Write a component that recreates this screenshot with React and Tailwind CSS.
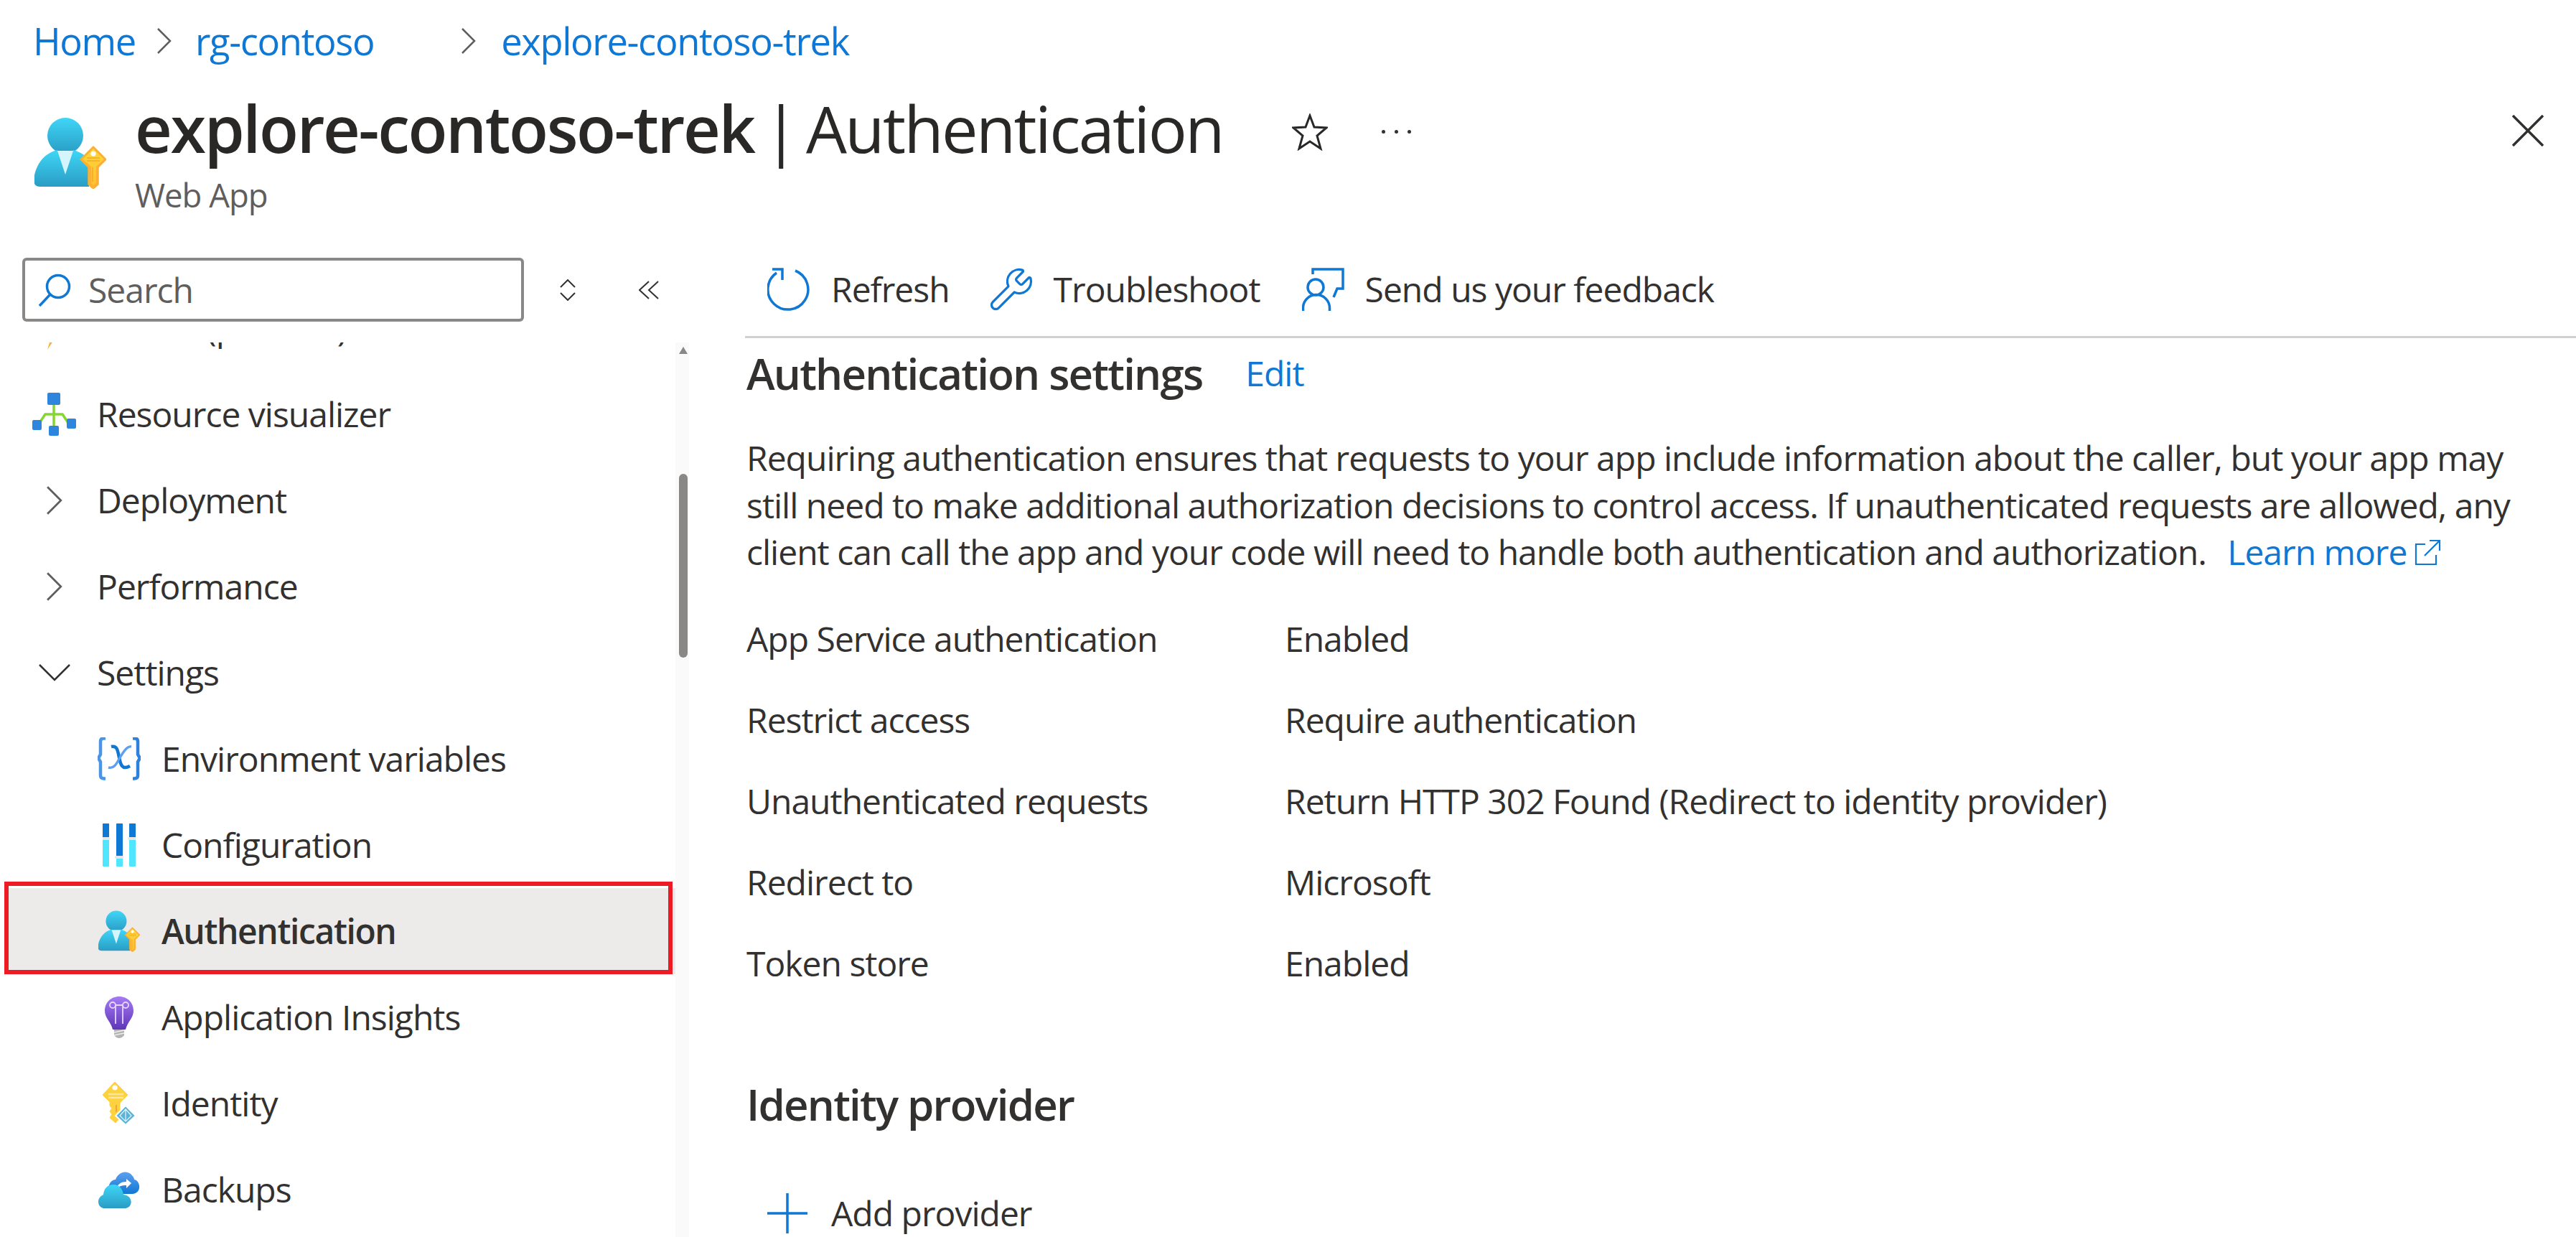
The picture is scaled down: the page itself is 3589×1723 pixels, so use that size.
import React from 'react';
import { Wrench } from 'lucide-react';

const Chevron = ({ className }) => (
  <svg className={className} viewBox="0 0 20 36" fill="none" stroke="#605e5c" strokeWidth="2.5">
    <path d="M1 1 L18 18 L1 35" />
  </svg>
);

const AuthIcon = ({ id, className }) => (
  <svg className={className} viewBox="0 0 100 100">
    <defs>
      <linearGradient id={`${id}-a`} x1="0" y1="0" x2="0" y2="1">
        <stop offset="0" stopColor="#3fd6f7" />
        <stop offset="1" stopColor="#2a9cc4" />
      </linearGradient>
      <linearGradient id={`${id}-k`} x1="0" y1="0" x2="0" y2="1">
        <stop offset="0" stopColor="#ffd83b" />
        <stop offset="1" stopColor="#fcc02e" />
      </linearGradient>
    </defs>
    <circle cx="43" cy="26" r="25" fill={`url(#${id}-a)`} />
    <path d="M-1 88 C1 66 14 50 32 46 L43 62 L54 46 C62 48 70 52 76 60 L76 97 L8 97 Q-1 97 -1 88Z" fill={`url(#${id}-a)`} />
    <path d="M32 47 L54 47 L43 80Z" fill="#d5f5fc" />
    <path d="M82 41 L100 59 L89 70 L89 94 L82 100 L75 94 L75 70 L64 59Z" fill="#fbb034" stroke="#fbb034" strokeWidth="1.5" strokeLinejoin="round" />
    <path d="M82 44 L97 59 L86 69 L86 92 L82 96 L79 92 L79 69 L67 59Z" fill={`url(#${id}-k)`} />
    <circle cx="82" cy="51" r="3.6" fill="#fff" />
    <path d="M73 57 H91 M73 61 H91" stroke="#f9a825" strokeWidth="1.6" />
    <path d="M81 70 V90" stroke="#f9a825" strokeWidth="1.6" />
  </svg>
);

const VisualizerIcon = () => (
  <svg className="w-[62px] h-[60px]" viewBox="0 0 62 60" fill="none">
    <path d="M30 14 V50 M10 42 L18 30 H42 L50 42" stroke="#86d633" strokeWidth="3.5" />
    <rect x="21" y="0" width="18" height="17" rx="2" fill="#2d85de" />
    <rect x="0" y="38" width="13" height="14" rx="2" fill="#2d85de" />
    <rect x="48" y="36" width="13" height="14" rx="2" fill="#2d85de" />
    <rect x="23" y="46" width="14" height="14" rx="2" fill="#2d85de" />
  </svg>
);

const EnvIcon = () => (
  <svg className="w-[60px] h-[60px]" viewBox="0 0 60 60" fill="none">
    <path d="M11 1.5 H8 Q4 1.5 4 6 V24 L1 29 L4 34 V53 Q4 57.5 9 57.5 H11" stroke="#4b95e6" strokeWidth="4.5" />
    <path d="M49 1.5 H52 Q56 1.5 56 6 V24 L59 29 L56 34 V53 Q56 57.5 51 57.5 H49" stroke="#2c82dc" strokeWidth="4.5" />
    <path d="M19 13 C27 11 28 18 30 28 C32 38 34 46 45 40" stroke="#0f78d4" strokeWidth="4.5" />
    <path d="M47 13 C41 12 36 20 30 30 C26 38 22 44 15 42" stroke="#5ea0ef" strokeWidth="3.4" />
  </svg>
);

const ConfigIcon = () => (
  <svg className="w-[46px] h-[60px]" viewBox="0 0 46 60">
    <rect x="0" y="0" width="9" height="60" rx="1" fill="#50e6ff" />
    <rect x="19" y="0" width="9" height="60" rx="1" fill="#50e6ff" />
    <rect x="37" y="0" width="9" height="60" rx="1" fill="#50e6ff" />
    <rect x="0" y="0" width="9" height="22" rx="1" fill="#0f78d4" />
    <rect x="19" y="0" width="9" height="48" rx="1" fill="#0f78d4" />
    <rect x="37" y="0" width="9" height="22" rx="1" fill="#0f78d4" />
    <rect x="-2" y="19" width="12" height="4" rx="1.5" fill="#e6e6e6" />
    <rect x="17" y="45" width="12" height="4" rx="1.5" fill="#e6e6e6" />
    <rect x="35" y="19" width="12" height="4" rx="1.5" fill="#e6e6e6" />
  </svg>
);

const BulbIcon = () => (
  <svg className="w-[40px] h-[58px]" viewBox="0 0 40 58" fill="none">
    <defs>
      <linearGradient id="bulb" x1="0" y1="0" x2="0" y2="1">
        <stop offset="0" stopColor="#a67af4" />
        <stop offset="1" stopColor="#5e35b8" />
      </linearGradient>
    </defs>
    <path d="M20 0 C32 0 40 9 40 20 C40 30 31 36 29 46 H11 C9 36 0 30 0 20 C0 9 8 0 20 0Z" fill="url(#bulb)" />
    <path d="M15 12 V38 M25 12 V38 M15 12 H25" stroke="#e6d5fb" strokeWidth="1.8" />
    <circle cx="11" cy="12" r="4" stroke="#e6d5fb" strokeWidth="1.8" />
    <circle cx="29" cy="12" r="4" stroke="#e6d5fb" strokeWidth="1.8" />
    <path d="M13 46 H27 V54 Q24 58 20 58 Q16 58 13 54Z" fill="#b3b3b3" />
    <path d="M13 50 L27 47 M13 54 L27 51" stroke="#eeeeee" strokeWidth="1.4" />
  </svg>
);

const IdentityIcon = () => (
  <svg className="w-[46px] h-[60px]" viewBox="0 0 46 60" fill="none">
    <path d="M17 0 L35 18 L24 29 L24 50 L18 57 L10 50 L13 45 L10 41 L13 37 L10 33 L10 28 L0 18Z" fill="#fdd23e" stroke="#fdd23e" strokeWidth="1" strokeLinejoin="round" />
    <circle cx="17" cy="8" r="3.6" fill="#fff" />
    <path d="M8 17 H29 M8 22 H29" stroke="#fbe8a0" strokeWidth="2.4" />
    <path d="M19 32 V42" stroke="#f6a33b" strokeWidth="2" />
    <path d="M32 33 L46 47 L32 60 L18 47Z" fill="#5cb3d8" stroke="#fff" strokeWidth="2" />
    <path d="M32 38 L40 47 L32 55 L24 47Z M32 38 V55" stroke="#e3f4fb" strokeWidth="1.2" />
  </svg>
);

const BackupIcon = () => (
  <svg className="w-[60px] h-[52px]" viewBox="0 0 60 52" fill="none">
    <defs>
      <linearGradient id="cloud-b" x1="0" y1="0" x2="0" y2="1">
        <stop offset="0" stopColor="#5ea0ef" />
        <stop offset="1" stopColor="#0f78d4" />
      </linearGradient>
      <linearGradient id="cloud-f" x1="0" y1="0" x2="0" y2="1">
        <stop offset="0" stopColor="#3fd6f7" />
        <stop offset="1" stopColor="#2a9cc4" />
      </linearGradient>
    </defs>
    <path d="M18 32 C12 22 18 12 25 12 C28 3 38 -2 46 4 C50 8 51 10 51 12 C60 13 62 32 48 32Z" fill="url(#cloud-b)" />
    <path d="M26 25 C28 18 33 15 40 15 L40 11 L47 17 L40 24 L40 20 C34 20 30 21 26 25Z" fill="#fff" />
    <path d="M10 52 C0 52 -3 38 8 33 C9 24 14 19 22 19 C31 19 35 26 36 33 C50 34 50 52 37 52Z" fill="url(#cloud-f)" />
  </svg>
);

const RefreshIcon = () => (
  <svg className="w-[60px] h-[60px]" viewBox="0 0 60 60" fill="none" stroke="#0f78d4" strokeWidth="3.5">
    <path d="M39 4 A28 28 0 1 1 13 7" />
    <path d="M7 2 H21 V17" />
  </svg>
);

const FeedbackIcon = () => (
  <svg className="w-[59px] h-[60px]" viewBox="0 0 59 60" fill="none" stroke="#0f78d4" strokeWidth="3.5">
    <path d="M15 9 V2 H57 V29 H49 L44 41" />
    <circle cx="19" cy="27" r="11" />
    <path d="M1.5 60 V56 A18.5 18.5 0 0 1 38.5 56 V60" />
  </svg>
);

const MenuRow = ({ icon, label, sub, active }) => (
  <div className={`flex items-center h-[120px] ${sub ? 'pl-[130px]' : 'pl-[39px]'} ${active ? 'bg-[#edebe9] font-semibold tracking-[-1.4px]' : ''}`}>
    <div className={`flex items-center justify-center shrink-0 ${sub ? 'w-[60px] mr-[29px]' : 'w-[62px] mr-[28px]'}`}>{icon}</div>
    <span>{label}</span>
  </div>
);

const settings = [
  { label: 'App Service authentication', value: 'Enabled' },
  { label: 'Restrict access', value: 'Require authentication' },
  { label: 'Unauthenticated requests', value: 'Return HTTP 302 Found (Redirect to identity provider)' },
  { label: 'Redirect to', value: 'Microsoft' },
  { label: 'Token store', value: 'Enabled' },
];

const App = () => {
  return (
    <div className="w-[3589px] h-[1723px] overflow-hidden bg-white text-[#323130] text-[48px] leading-[66px] font-['Open_Sans',sans-serif] tracking-[-1px]">
      {/* Breadcrumb */}
      <div className="flex items-center h-[58px] mt-[28px] pl-[46px] text-[#0f78d4] text-[52.5px] tracking-[-1.35px]">
        <span>Home</span>
        <Chevron className="w-[20px] h-[36px] ml-[30px] mr-[33px]" />
        <span>rg-contoso</span>
        <Chevron className="w-[20px] h-[36px] ml-[122px] mr-[35px]" />
        <span>explore-contoso-trek</span>
      </div>

      {/* Title */}
      <div className="flex items-start pl-[48px] pr-[45px] h-[186px] pt-[32px]">
        <AuthIcon id="hdr" className="w-[100px] h-[100px] mt-[45px] shrink-0" />
        <div className="ml-[40px]">
          <div className="text-[90px] leading-[120px] text-[#292827] tracking-[-2.6px] [word-spacing:-8px] whitespace-nowrap">
            <span className="font-semibold tracking-[-2.37px] [word-spacing:0]">explore-contoso-trek</span> | Authentication
          </div>
          <div className="text-[45.5px] leading-[60px] text-[#605e5c] mt-[3px]">Web App</div>
        </div>
        <svg className="w-[50px] h-[52px] ml-[96px] mt-[40px] shrink-0" viewBox="0 0 50 52" fill="none" stroke="#292827" strokeWidth="3">
          <path d="M25 3 L31 19 L48 20 L35 31 L40 49 L25 39 L10 49 L15 31 L2 20 L19 19Z" />
        </svg>
        <div className="flex gap-[13px] ml-[75px] mt-[63px] shrink-0">
          <span className="w-[5px] h-[5px] rounded-full bg-[#323130]" />
          <span className="w-[5px] h-[5px] rounded-full bg-[#323130]" />
          <span className="w-[5px] h-[5px] rounded-full bg-[#323130]" />
        </div>
        <svg className="w-[44px] h-[44px] ml-auto mt-[42px] shrink-0" viewBox="0 0 44 44" stroke="#323130" strokeWidth="3.5">
          <path d="M1 1 L43 43 M43 1 L1 43" />
        </svg>
      </div>

      <div className="flex h-[1451px]">
        {/* Sidebar */}
        <div className="w-[960px] shrink-0 relative">
          <div className="flex items-center h-[89px] mt-[87px] ml-[31px]">
            <div className="w-[699px] h-[89px] border-[4px] border-[#8a8886] rounded-[6px] flex items-center pl-[18px] text-[#605e5c]">
              <svg className="w-[46px] h-[46px] mr-[24px]" viewBox="0 0 46 46" fill="none" stroke="#0f78d4" strokeWidth="3.5">
                <circle cx="28" cy="18" r="15.5" />
                <path d="M17 29 L2 45" />
              </svg>
              <span>Search</span>
            </div>
            <svg className="w-[22px] h-[30px] ml-[50px]" viewBox="0 0 22 30" fill="none" stroke="#323130" strokeWidth="2">
              <path d="M1 11 L11 1 L21 11 M1 19 L11 29 L21 19" />
            </svg>
            <svg className="w-[28px] h-[26px] ml-[88px]" viewBox="0 0 28 26" fill="none" stroke="#323130" strokeWidth="2">
              <path d="M14 1 L1 13 L14 25 M27 1 L14 13 L27 25" />
            </svg>
          </div>
          <div className="flex mt-[29px] h-[1246px] overflow-hidden">
            <div className="w-[941px] pl-[6px] shrink-0">
              <div className="mt-[-80px]">
                <MenuRow label="Events (preview)" icon={
                  <svg className="w-[40px] h-[60px]" viewBox="0 0 40 60"><path d="M22 0 L4 34 H18 L10 60 L36 22 H22 L30 0Z" fill="#fcb034" /></svg>
                } />
                <MenuRow label="Resource visualizer" icon={<VisualizerIcon />} />
                <MenuRow label="Deployment" icon={<Chevron className="w-[22px] h-[44px]" />} />
                <MenuRow label="Performance" icon={<Chevron className="w-[22px] h-[44px]" />} />
                <MenuRow label="Settings" icon={
                  <svg className="w-[44px] h-[24px]" viewBox="0 0 44 24" fill="none" stroke="#323130" strokeWidth="2.5"><path d="M1 1 L22 22 L43 1" /></svg>
                } />
                <MenuRow sub label="Environment variables" icon={<EnvIcon />} />
                <MenuRow sub label="Configuration" icon={<ConfigIcon />} />
                <MenuRow sub active label="Authentication" icon={<AuthIcon id="nav" className="w-[58px] h-[58px]" />} />
                <MenuRow sub label="Application Insights" icon={<BulbIcon />} />
                <MenuRow sub label="Identity" icon={<IdentityIcon />} />
                <MenuRow sub label="Backups" icon={<BackupIcon />} />
              </div>
            </div>
            {/* Scrollbar */}
            <div className="w-[19px] bg-[#fafafa] pl-[5px] pt-[6px]">
              <div className="w-0 h-0 border-l-[6px] border-r-[6px] border-b-[10px] border-l-transparent border-r-transparent border-b-[#8a8886]" />
              <div className="w-[12px] h-[256px] mt-[167px] rounded-full bg-[#8a8886]" />
            </div>
          </div>
          {/* Red annotation around the selected item */}
          <div className="absolute left-[6px] top-[956px] w-[931px] h-[129px] border-[6px] border-[#ed1c24]" />
        </div>

        {/* Main */}
        <div className="flex-1 pl-[78px] min-w-0">
          <div className="flex items-center h-[60px] mt-[101px] text-[#323130]">
            <div className="ml-[31px] flex items-center"><RefreshIcon /><span className="ml-[29px]">Refresh</span></div>
            <div className="ml-[53px] flex items-center"><Wrench className="w-[66px] h-[66px] -scale-x-100 rotate-90" strokeWidth={1.2} color="#0f78d4" /><span className="ml-[26px]">Troubleshoot</span></div>
            <div className="ml-[58px] flex items-center"><FeedbackIcon /><span className="ml-[29px]">Send us your feedback</span></div>
          </div>
          <div className="h-[3px] bg-[#d2d0ce] mt-[35px]" />
          <div className="pl-[2px] whitespace-nowrap">
            <div className="flex items-center h-[72px] mt-[13px]">
              <span className="text-[60px] font-semibold tracking-[-1.8px]">Authentication settings</span>
              <span className="ml-[60px] text-[#0f78d4]">Edit</span>
            </div>
            <p className="mt-[49px] leading-[65.5px]">
              Requiring authentication ensures that requests to your app include information about the caller, but your app may<br />
              still need to make additional authorization decisions to control access. If unauthenticated requests are allowed, any<br />
              client can call the app and your code will need to handle both authentication and authorization. <span className="ml-[18px] text-[#0f78d4]">Learn more</span>
              <svg className="inline-block w-[38px] h-[38px] ml-[10px] align-[-2px]" viewBox="0 0 38 38" fill="none" stroke="#0f78d4" strokeWidth="2.2">
                <path d="M16 7 H3 V35 H31 V22 M22 2 H36 V16 M36 2 L15 23" />
              </svg>
            </p>
            <div className="mt-[32px]">
              {settings.map((item) => (
                <div key={item.label} className="flex items-center h-[113px]">
                  <span className="w-[750px] shrink-0">{item.label}</span>
                  <span>{item.value}</span>
                </div>
              ))}
            </div>
            <div className="text-[60px] font-semibold tracking-[-1.8px] mt-[103px] leading-[72px]">Identity provider</div>
            <div className="flex items-center mt-[86px] h-[60px]">
              <svg className="w-[56px] h-[56px] ml-[29px] mr-[33px]" viewBox="0 0 56 56" stroke="#0f78d4" strokeWidth="3.5">
                <path d="M28 0 V56 M0 28 H56" />
              </svg>
              <span>Add provider</span>
            </div>
          </div>
        </div>
      </div>
    </div>
  );
};

export default App;
